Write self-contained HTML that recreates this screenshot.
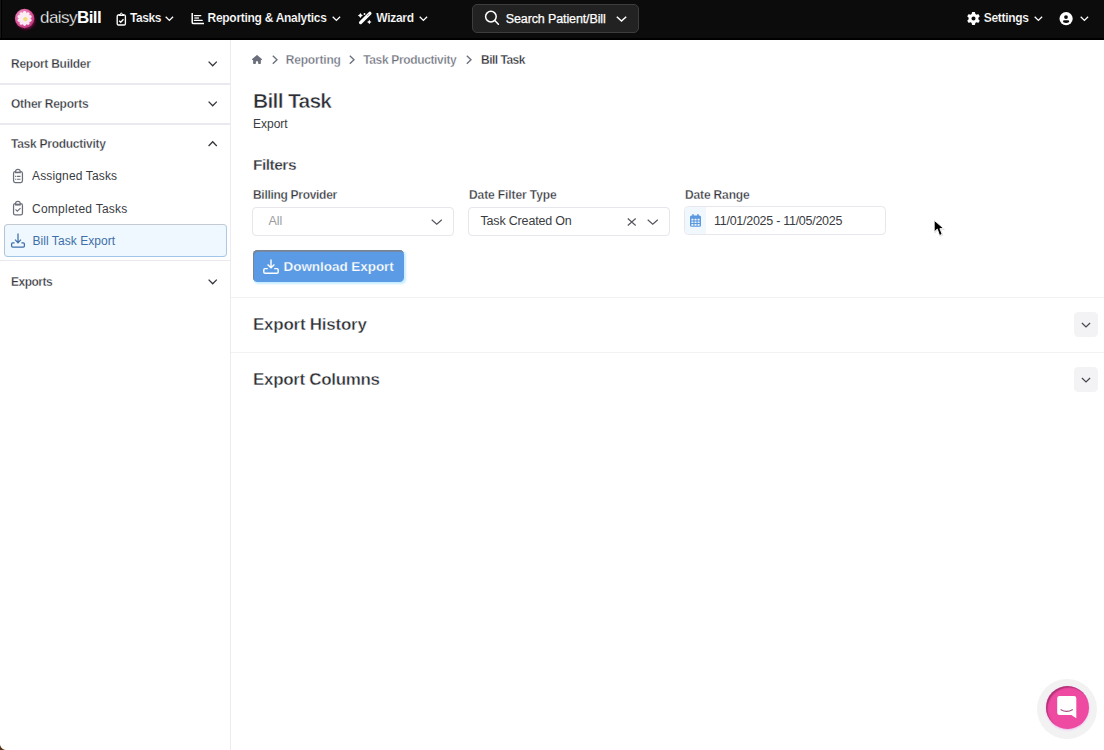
<!DOCTYPE html>
<html><head><meta charset="utf-8">
<style>
*{box-sizing:border-box;margin:0;padding:0}
html,body{width:1104px;height:750px;overflow:hidden;background:#fff;font-family:"Liberation Sans",sans-serif;color:#2b2d33}
.a{position:absolute}
svg{position:absolute;overflow:visible}
.t{position:absolute;white-space:nowrap;line-height:1}
#hdr{position:absolute;left:0;top:0;width:1104px;height:40px;background:#0c0c0c;border-bottom:2px solid #000}
.ht{position:absolute;color:#fff;font-weight:bold;font-size:12px;white-space:nowrap;line-height:1}
.sh{position:absolute;left:11px;font-size:12px;font-weight:bold;color:#33353b;white-space:nowrap;line-height:1;letter-spacing:-0.26px;-webkit-text-stroke:0.3px #fff}
.sb{-webkit-text-stroke:0.3px #fff}
.hb{-webkit-text-stroke:0.15px #0c0c0c}
.sdiv{position:absolute;left:0;width:230px;height:1px;background:#e9e9ef}
.si{position:absolute;left:32px;font-size:12px;color:#3a3c42;white-space:nowrap;line-height:1;letter-spacing:0.15px}
.mdiv{position:absolute;left:231px;width:873px;height:1px;background:#f2f2f4}
</style></head><body>
<div id="hdr">
  <div class="a" style="left:0;top:0;width:1px;height:38px;background:#161616"></div><div class="a" style="left:1px;top:0;width:1px;height:38px;background:#000"></div>
  <svg style="left:10px;top:4px" width="30" height="30" viewBox="-14.6 -14.5 30 30"><defs><radialGradient id="pg" cx="40%" cy="35%" r="70%"><stop offset="0" stop-color="#f5a6cf"/><stop offset="0.6" stop-color="#e05a9e"/><stop offset="1" stop-color="#b8337a"/></radialGradient><filter id="bl" x="-50%" y="-50%" width="200%" height="200%"><feGaussianBlur stdDeviation="1.2"/></filter></defs><circle cx="1" cy="1.5" r="9.6" fill="#6a0b3a" filter="url(#bl)"/><circle r="9.7" fill="url(#pg)"/><g fill="#fdf2f8" opacity="0.95"><ellipse cx="0" cy="-4.1" rx="1.9" ry="3.3" transform="rotate(0)"/><ellipse cx="0" cy="-4.1" rx="1.9" ry="3.3" transform="rotate(36)"/><ellipse cx="0" cy="-4.1" rx="1.9" ry="3.3" transform="rotate(72)"/><ellipse cx="0" cy="-4.1" rx="1.9" ry="3.3" transform="rotate(108)"/><ellipse cx="0" cy="-4.1" rx="1.9" ry="3.3" transform="rotate(144)"/><ellipse cx="0" cy="-4.1" rx="1.9" ry="3.3" transform="rotate(180)"/><ellipse cx="0" cy="-4.1" rx="1.9" ry="3.3" transform="rotate(216)"/><ellipse cx="0" cy="-4.1" rx="1.9" ry="3.3" transform="rotate(252)"/><ellipse cx="0" cy="-4.1" rx="1.9" ry="3.3" transform="rotate(288)"/><ellipse cx="0" cy="-4.1" rx="1.9" ry="3.3" transform="rotate(324)"/></g><circle cx="0.8" cy="0.6" r="2.2" fill="#f3dc78"/></svg>
  <div class="ht" style="left:40px;top:9px;font-size:17px;font-weight:normal;letter-spacing:-0.55px"><span style="-webkit-text-stroke:0.3px #0c0c0c">daisy</span><b>Bill</b></div>
  <!-- tasks icon -->
  <svg style="left:116px;top:12px" width="11" height="14" viewBox="0 0 11 14"><rect x="1.2" y="2.9" width="8.2" height="10.1" rx="1.3" fill="none" stroke="#fff" stroke-width="1.35"/><path d="M2.6 2.3H4Q4.2 0.6 5.3 0.6T6.6 2.3H8V4.1H2.6z" fill="#fff"/><circle cx="5.3" cy="2.1" r="0.55" fill="#0c0c0c"/><path d="M3.2 8.8l1.5 1.4 2.8-2.9" fill="none" stroke="#fff" stroke-width="1.35"/></svg>
  <div class="ht hb" style="left:130px;top:12px;letter-spacing:-0.45px">Tasks</div>
  <svg style="left:165px;top:15.8px" width="9" height="5.5" viewBox="0 0 9 5.5"><path d="M0.7 0.7L4.4 4.4 8.1 0.7" fill="none" stroke="#fff" stroke-width="1.3"/></svg>
  <!-- chart icon -->
  <svg style="left:191px;top:13px" width="13" height="12" viewBox="0 0 13 12"><path d="M1.2 0V9.4Q1.2 10.6 2.4 10.6H13" fill="none" stroke="#fff" stroke-width="1.5"/><path d="M3.4 2.6h6.4M3.4 7.4h7.8" fill="none" stroke="#fff" stroke-width="1.3" stroke-linecap="round"/><path d="M3.4 5h4.6" fill="none" stroke="#ccc" stroke-width="1.6"/></svg>
  <div class="ht hb" style="left:207.5px;top:12px;letter-spacing:-0.28px">Reporting &amp; Analytics</div>
  <svg style="left:332.2px;top:15.8px" width="9" height="5.5" viewBox="0 0 9 5.5"><path d="M0.7 0.7L4.4 4.4 8.1 0.7" fill="none" stroke="#fff" stroke-width="1.3"/></svg>
  <!-- wand icon -->
  <svg style="left:354px;top:8px" width="22" height="20" viewBox="354 8 22 20"><path d="M360.6 22.6L369.9 13.3" fill="none" stroke="#fff" stroke-width="3.3" stroke-linecap="round"/><path d="M367.4 15.8L369 14.2" stroke="#0c0c0c" stroke-width="0.7" stroke-dasharray="0.8 0.5"/><path d="M360.4 13.0Q361.025 14.875 362.9 15.5Q361.025 16.125 360.4 18.0Q359.775 16.125 357.9 15.5Q359.775 14.875 360.4 13.0zM369.3 19.7Q369.875 21.425 371.6 22Q369.875 22.575 369.3 24.3Q368.725 22.575 367.0 22Q368.725 21.425 369.3 19.7z" fill="#fff"/><circle cx="364.5" cy="14" r="0.95" fill="#fff"/></svg>
  <div class="ht hb" style="left:376.3px;top:12px;letter-spacing:-0.3px">Wizard</div>
  <svg style="left:418.5px;top:15.8px" width="9" height="5.5" viewBox="0 0 9 5.5"><path d="M0.7 0.7L4.4 4.4 8.1 0.7" fill="none" stroke="#fff" stroke-width="1.3"/></svg>
  <!-- search -->
  <div class="a" style="left:472px;top:4px;width:167px;height:29px;border:1px solid #3d3d3d;border-radius:5px;background:#222"></div>
  <svg style="left:478px;top:8px" width="24" height="22" viewBox="478 8 24 22"><circle cx="490.9" cy="16.6" r="5.3" fill="none" stroke="#fff" stroke-width="1.5"/><path d="M494.8 20.5L498.4 24.2" stroke="#fff" stroke-width="1.5" stroke-linecap="round"/></svg>
  <div class="ht" style="left:505.8px;top:12.8px;font-size:12.5px;font-weight:normal;letter-spacing:-0.12px;-webkit-text-stroke:0.25px #fff">Search Patient/Bill</div>
  <svg style="left:615.7px;top:15.6px" width="11" height="6" viewBox="0 0 11 6"><path d="M0.8 0.8L5.5 5 10.2 0.8" fill="none" stroke="#fff" stroke-width="1.5"/></svg>
  <!-- settings -->
  <svg style="left:967px;top:12px" width="13" height="13" viewBox="0 0 512 512"><path fill="#fff" d="M495.9 166.6c3.2 8.7 .5 18.4-6.4 24.6l-43.3 39.4c1.1 8.3 1.7 16.8 1.7 25.4s-.6 17.1-1.7 25.4l43.3 39.4c6.9 6.2 9.6 15.9 6.4 24.6c-4.400 11.900-9.700 23.300-15.800 34.300l-4.700 8.100c-6.600 11-14 21.400-22.100 31.200c-5.900 7.200-15.700 9.600-24.500 6.800l-55.700-17.700c-13.400 10.300-28.200 18.900-44 25.400l-12.500 57.100c-2 9.100-9 16.300-18.200 17.800c-13.800 2.300-28 3.500-42.500 3.500s-28.700-1.200-42.500-3.500c-9.200-1.500-16.200-8.700-18.200-17.800l-12.500-57.100c-15.800-6.500-30.600-15.100-44-25.400L83.100 425.900c-8.800 2.800-18.600 .3-24.500-6.800c-8.100-9.800-15.500-20.200-22.100-31.200l-4.700-8.100c-6.100-11-11.400-22.400-15.800-34.300c-3.200-8.700-.5-18.400 6.400-24.600l43.300-39.400C64.600 273.100 64 264.600 64 256s.6-17.100 1.700-25.400L22.400 191.200c-6.900-6.200-9.600-15.900-6.400-24.600c4.400-11.900 9.700-23.300 15.800-34.300l4.700-8.100c6.600-11 14-21.400 22.100-31.200c5.900-7.200 15.700-9.600 24.500-6.800l55.700 17.700c13.400-10.300 28.200-18.900 44-25.400l12.500-57.100c2-9.100 9-16.300 18.200-17.800C227.300 1.200 241.500 0 256 0s28.700 1.200 42.500 3.500c9.200 1.500 16.200 8.700 18.200 17.800l12.500 57.100c15.800 6.500 30.600 15.100 44 25.400l55.700-17.700c8.800-2.800 18.600-.3 24.500 6.800c8.100 9.800 15.500 20.200 22.100 31.200l4.700 8.100c6.100 11 11.400 22.400 15.800 34.300zM256 336a80 80 0 1 0 0-160 80 80 0 1 0 0 160z"/></svg>
  <div class="ht hb" style="left:983.7px;top:12px;letter-spacing:-0.3px">Settings</div>
  <svg style="left:1033.5px;top:15.8px" width="9" height="5.5" viewBox="0 0 9 5.5"><path d="M0.7 0.7L4.4 4.4 8.1 0.7" fill="none" stroke="#fff" stroke-width="1.3"/></svg>
  <!-- user -->
  <svg style="left:1054px;top:8px" width="38" height="22" viewBox="1054 8 38 22"><circle cx="1066.1" cy="18.6" r="6.6" fill="#fff"/><circle cx="1066" cy="17.1" r="1.9" fill="#0c0c0c"/><path d="M1063 21.3Q1063 20.3 1064.3 20.3H1067.9Q1069.2 20.3 1069.2 21.3Q1069.2 22.9 1066.1 22.9Q1063 22.9 1063 21.3z" fill="#0c0c0c"/></svg>
  <svg style="left:1079.7px;top:15.8px" width="9" height="5.5" viewBox="0 0 9 5.5"><path d="M0.7 0.7L4.4 4.4 8.1 0.7" fill="none" stroke="#fff" stroke-width="1.3"/></svg>
</div>

<!-- sidebar -->
<div class="a" style="left:230px;top:40px;width:1px;height:710px;background:#ebebf0"></div>
<div class="sh" style="top:58px">Report Builder</div>
<svg style="left:208px;top:61.3px" width="9.4" height="5.6" viewBox="0 0 9.4 5.6"><path d="M0.6 0.6L4.7 4.8 8.8 0.6" fill="none" stroke="#33353b" stroke-width="1.3"/></svg>
<div class="sdiv" style="top:83.3px;height:1.3px"></div>
<div class="sh" style="top:98px">Other Reports</div>
<svg style="left:208px;top:101.3px" width="9.4" height="5.6" viewBox="0 0 9.4 5.6"><path d="M0.6 0.6L4.7 4.8 8.8 0.6" fill="none" stroke="#33353b" stroke-width="1.3"/></svg>
<div class="sdiv" style="top:123.3px;height:1.3px"></div>
<div class="sh" style="top:138px">Task Productivity</div>
<svg style="left:208px;top:140.5px" width="9.4" height="5.6" viewBox="0 0 9.4 5.6"><path d="M0.6 5L4.7 0.8 8.8 5" fill="none" stroke="#33353b" stroke-width="1.3"/></svg>
<!-- clipboard list -->
<svg style="left:8px;top:166px" width="20" height="20" viewBox="8 166 20 20"><rect x="13.55" y="171.55" width="8.9" height="11.0" rx="1.7" fill="none" stroke="#6b6f7b" stroke-width="1.25"/><path d="M15.6 172.6V171.2Q15.6 169.3 17.9 169.3Q20.2 169.3 20.2 171.2V172.6Z" fill="#fff" stroke="#6b6f7b" stroke-width="1.2"/><path d="M15.6 172.3H20.2" stroke="#6b6f7b" stroke-width="1.3"/><path d="M15.1 176.4h1M16.8 176.4h3.7M15.1 179.2h1M16.8 179.2h3.7" stroke="#6b6f7b" stroke-width="1.1"/></svg>
<div class="si" style="top:170px">Assigned Tasks</div>
<svg style="left:8px;top:198px" width="20" height="20" viewBox="8 198 20 20"><rect x="13.55" y="203.55" width="8.9" height="11.4" rx="1.7" fill="none" stroke="#6b6f7b" stroke-width="1.25"/><path d="M15.6 204.8V203.2Q15.6 201.3 17.9 201.3Q20.2 201.3 20.2 203.2V204.8Z" fill="#fff" stroke="#6b6f7b" stroke-width="1.2"/><path d="M15.6 204.4H20.2" stroke="#6b6f7b" stroke-width="1.5"/><path d="M15.5 209.4l1.8 1.8 3.2-3.1" fill="none" stroke="#6b6f7b" stroke-width="1.2"/></svg>
<div class="si" style="top:202.6px;letter-spacing:0.25px">Completed Tasks</div>
<div class="a" style="left:3.5px;top:224px;width:223.5px;height:33.3px;border:1px solid;border-top-width:1.8px;border-color:#c5cad1 #abc9e6 #a3c5e8 #b3c4d9;border-radius:4px;background:#eef8fe"></div>
<svg style="left:11px;top:233px" width="14" height="15" viewBox="0 0 14 15"><path d="M7 0.6V9.6M4.1 6.6L7 9.8 9.9 6.6" fill="none" stroke="#3f6fa8" stroke-width="1.25"/><path d="M3.6 9.8H1.7Q0.6 9.8 0.6 10.9V13.1Q0.6 14.2 1.7 14.2H12.3Q13.4 14.2 13.4 13.1V10.9Q13.4 9.8 12.3 9.8H10.4" fill="none" stroke="#3f6fa8" stroke-width="1.25"/></svg>
<div class="si" style="top:235px;left:32.5px;color:#3f6fa8;letter-spacing:0.05px">Bill Task Export</div>
<div class="sdiv" style="top:259.6px;height:1.4px"></div>
<div class="sh" style="top:275.5px;letter-spacing:-0.5px">Exports</div>
<svg style="left:208px;top:278.5px" width="9.4" height="5.6" viewBox="0 0 9.4 5.6"><path d="M0.6 0.6L4.7 4.8 8.8 0.6" fill="none" stroke="#33353b" stroke-width="1.3"/></svg>

<!-- main -->
<svg style="left:252.3px;top:54.7px" width="10" height="9" viewBox="0 0 576 512"><path fill="#6b6f7b" d="M575.8 255.5c0 18-15 32.1-32 32.1h-32l.7 160.2c0 2.700-.2 5.400-.5 8.100V472c0 22.100-17.900 40-40 40H456c-1.100 0-2.200 0-3.300-.1c-1.400 .1-2.800 .1-4.200 .1H416 392c-22.100 0-40-17.900-40-40V448 384c0-17.700-14.300-32-32-32H256c-17.700 0-32 14.300-32 32v64 24c0 22.100-17.900 40-40 40H160 128.100c-1.500 0-3-.1-4.500-.2c-1.200 .1-2.400 .2-3.600 .2H104c-22.100 0-40-17.900-40-40V360c0-.9 0-1.900 .1-2.800V287.600H32c-18 0-32-14-32-32.100c0-9 3-17 10-24L266.400 8c7-7 15-8 22-8s15 2 21 7L564.800 231.500c8 7 12 15 11 24z"/></svg>
<svg style="left:271.6px;top:55px" width="6" height="9.4" viewBox="0 0 6 9.4"><path d="M0.8 0.7L5 4.7 0.8 8.7" fill="none" stroke="#6b6f7b" stroke-width="1.35"/></svg>
<div class="t sb" style="left:285.8px;top:53.6px;font-size:12px;color:#6b6f7b;font-weight:bold;letter-spacing:-0.2px">Reporting</div>
<svg style="left:348.6px;top:55px" width="6" height="9.4" viewBox="0 0 6 9.4"><path d="M0.8 0.7L5 4.7 0.8 8.7" fill="none" stroke="#6b6f7b" stroke-width="1.35"/></svg>
<div class="t sb" style="left:363.2px;top:53.6px;font-size:12px;color:#6b6f7b;font-weight:bold;letter-spacing:-0.35px">Task Productivity</div>
<svg style="left:466.3px;top:55px" width="6" height="9.4" viewBox="0 0 6 9.4"><path d="M0.8 0.7L5 4.7 0.8 8.7" fill="none" stroke="#6b6f7b" stroke-width="1.35"/></svg>
<div class="t sb" style="left:481px;top:53.6px;font-size:12px;color:#2b2d33;font-weight:bold;letter-spacing:-0.5px">Bill Task</div>

<div class="t sb" style="left:253px;top:90.2px;font-size:21px;color:#2b2d33;font-weight:bold;letter-spacing:-0.72px;-webkit-text-stroke:0.5px #fff">Bill Task</div>
<div class="t" style="left:253px;top:117.9px;font-size:12px;color:#3a3c42">Export</div>
<div class="t sb" style="left:253px;top:157.2px;font-size:15.5px;color:#33353b;font-weight:bold;letter-spacing:-0.5px;-webkit-text-stroke:0.3px #fff">Filters</div>

<div class="t sb" style="left:253px;top:188.7px;font-size:12px;color:#33353b;font-weight:bold;letter-spacing:-0.3px">Billing Provider</div>
<div class="t sb" style="left:469px;top:188.7px;font-size:12px;color:#33353b;font-weight:bold;letter-spacing:-0.1px">Date Filter Type</div>
<div class="t sb" style="left:685px;top:188.7px;font-size:12px;color:#33353b;font-weight:bold;letter-spacing:-0.15px">Date Range</div>

<div class="a" style="left:252px;top:207px;width:202px;height:29px;border:1px solid #e6e6ec;border-radius:4px"></div>
<div class="t" style="left:268.5px;top:215.4px;font-size:12.5px;color:#9a9ca2">All</div>
<svg style="left:431px;top:219px" width="11.5" height="6" viewBox="0 0 11.5 6"><path d="M0.7 0.7L5.75 5.2 10.8 0.7" fill="none" stroke="#55575d" stroke-width="1.2"/></svg>

<div class="a" style="left:468px;top:207px;width:202px;height:29px;border:1px solid #e6e6ec;border-radius:4px"></div>
<div class="t" style="left:480.5px;top:215.4px;font-size:12.5px;color:#3a3c42;letter-spacing:-0.18px">Task Created On</div>
<svg style="left:627px;top:218px" width="9.5" height="8" viewBox="0 0 9.5 8"><path d="M0.8 0.5L8.7 7.5M8.7 0.5L0.8 7.5" fill="none" stroke="#56585e" stroke-width="1.2"/></svg>
<svg style="left:647px;top:219px" width="11.5" height="6" viewBox="0 0 11.5 6"><path d="M0.7 0.7L5.75 5.2 10.8 0.7" fill="none" stroke="#55575d" stroke-width="1.2"/></svg>

<div class="a" style="left:684px;top:206px;width:202px;height:29px;border:1px solid #e6e6ec;border-radius:4.5px;overflow:hidden"><div class="a" style="left:0;top:0;width:21px;height:27px;background:#f0f8fe"></div></div>
<svg style="left:690px;top:214.1px" width="11" height="13" viewBox="0 0 11 13"><rect x="0" y="1.4" width="11" height="11.4" rx="1.6" fill="#5b98dd"/><rect x="2.3" y="0" width="1.5" height="3" rx=".7" fill="#5b98dd"/><rect x="7.2" y="0" width="1.5" height="3" rx=".7" fill="#5b98dd"/><g fill="#e9f3fd"><rect x="1.35" y="4.7" width="2.1" height="1.7" rx="0.3"/><rect x="4.45" y="4.7" width="2.1" height="1.7" rx="0.3"/><rect x="7.55" y="4.7" width="2.1" height="1.7" rx="0.3"/><rect x="1.35" y="7.4" width="2.1" height="1.7" rx="0.3"/><rect x="4.45" y="7.4" width="2.1" height="1.7" rx="0.3"/><rect x="7.55" y="7.4" width="2.1" height="1.7" rx="0.3"/><rect x="1.35" y="10.0" width="2.1" height="1.7" rx="0.3"/><rect x="4.45" y="10.0" width="2.1" height="1.7" rx="0.3"/><rect x="7.55" y="10.0" width="2.1" height="1.7" rx="0.3"/></g></svg>
<div class="t" style="left:714px;top:214.8px;font-size:12.5px;color:#3a3c42;letter-spacing:-0.27px">11/01/2025 - 11/05/2025</div>

<!-- cursor -->
<svg style="left:920px;top:210px" width="40" height="35" viewBox="920 210 40 35"><path d="M934.2 220.3V232L937.3 229.1 939.5 235.4 942.2 234.3 939.9 228.6H943.8Z" fill="#000" stroke="#000" stroke-width="1" stroke-linejoin="round" transform="translate(0.7 0.9)" opacity="0.1"/><path d="M934.2 220.3V232L937.3 229.1 939.5 235.4 942.2 234.3 939.9 228.6H943.8Z" fill="#000" stroke="#fff" stroke-width="0.9" stroke-linejoin="round"/></svg>
<!-- button -->
<div class="a" style="left:252.8px;top:250.3px;width:151.4px;height:31.8px;border-radius:4.5px;background:#5b9be5;box-shadow:inset 1px 1.7px 0 #7b8592,1.5px 1.5px 2px rgba(130,215,255,.45)"></div>
<svg style="left:263px;top:259px" width="16" height="15" viewBox="0 0 16 15"><path d="M8 0.6V8.6M4.6 5.4L8 8.8 11.4 5.4" fill="none" stroke="#fff" stroke-width="1.4"/><path d="M4.8 9.6H2.1Q0.8 9.6 0.8 10.9V13Q0.8 14.3 2.1 14.3H13.9Q15.2 14.3 15.2 13V10.9Q15.2 9.6 13.9 9.6H11.2" fill="none" stroke="#fff" stroke-width="1.4"/></svg>
<div class="t" style="left:283.5px;top:260px;font-size:13.5px;color:#fff;font-weight:bold;letter-spacing:-0.05px;-webkit-text-stroke:0.25px #5b9be5">Download Export</div>

<div class="mdiv" style="top:297px"></div>
<div class="t sb" style="left:253px;top:315.9px;font-size:17px;color:#2b2d33;font-weight:bold;letter-spacing:-0.25px;-webkit-text-stroke:0.4px #fff">Export History</div>
<div class="a" style="left:1074px;top:312px;width:24px;height:25px;border-radius:4.5px;background:#f3f3f5"></div>
<svg style="left:1081px;top:322px" width="10" height="6.4" viewBox="0 0 10 6.4"><path d="M0.9 1L5 5 9.1 1" fill="none" stroke="#46484e" stroke-width="1.25"/></svg>
<div class="mdiv" style="top:352px"></div>
<div class="t sb" style="left:253px;top:371.2px;font-size:17px;color:#2b2d33;font-weight:bold;letter-spacing:-0.33px;-webkit-text-stroke:0.4px #fff">Export Columns</div>
<div class="a" style="left:1074px;top:367px;width:24px;height:25px;border-radius:4.5px;background:#f3f3f5"></div>
<svg style="left:1081px;top:377px" width="10" height="6.4" viewBox="0 0 10 6.4"><path d="M0.9 1L5 5 9.1 1" fill="none" stroke="#46484e" stroke-width="1.25"/></svg>

<!-- chat -->
<div class="a" style="left:1037px;top:679px;width:60px;height:60px;border-radius:50%;background:#f2f2f3"></div>
<div class="a" style="left:1045.5px;top:685.5px;width:43px;height:43px;border-radius:50%;background:#ef4aa2;box-shadow:inset 1.5px 1.5px 1.5px rgba(90,20,60,.45),0 1px 2px rgba(230,80,230,.35)"></div>
<svg style="left:1057px;top:695.5px" width="19.5" height="22.5" viewBox="0 0 19.5 22.5"><path d="M2.5 0H17Q19.3 0 19.3 2.3V22.2L14.3 19H2.5Q0.2 19 0.2 16.7V2.3Q0.2 0 2.5 0z" fill="#fff"/><path d="M3.6 13.4Q9.7 17.5 15.8 13.4" fill="none" stroke="#a5507f" stroke-width="1.2"/></svg>
<div class="a" style="left:0;top:744px;width:6px;height:6px;background:radial-gradient(circle at 6px 0,rgba(0,0,0,0) 5.5px,#5a3212 6.3px)"></div>
</body></html>
